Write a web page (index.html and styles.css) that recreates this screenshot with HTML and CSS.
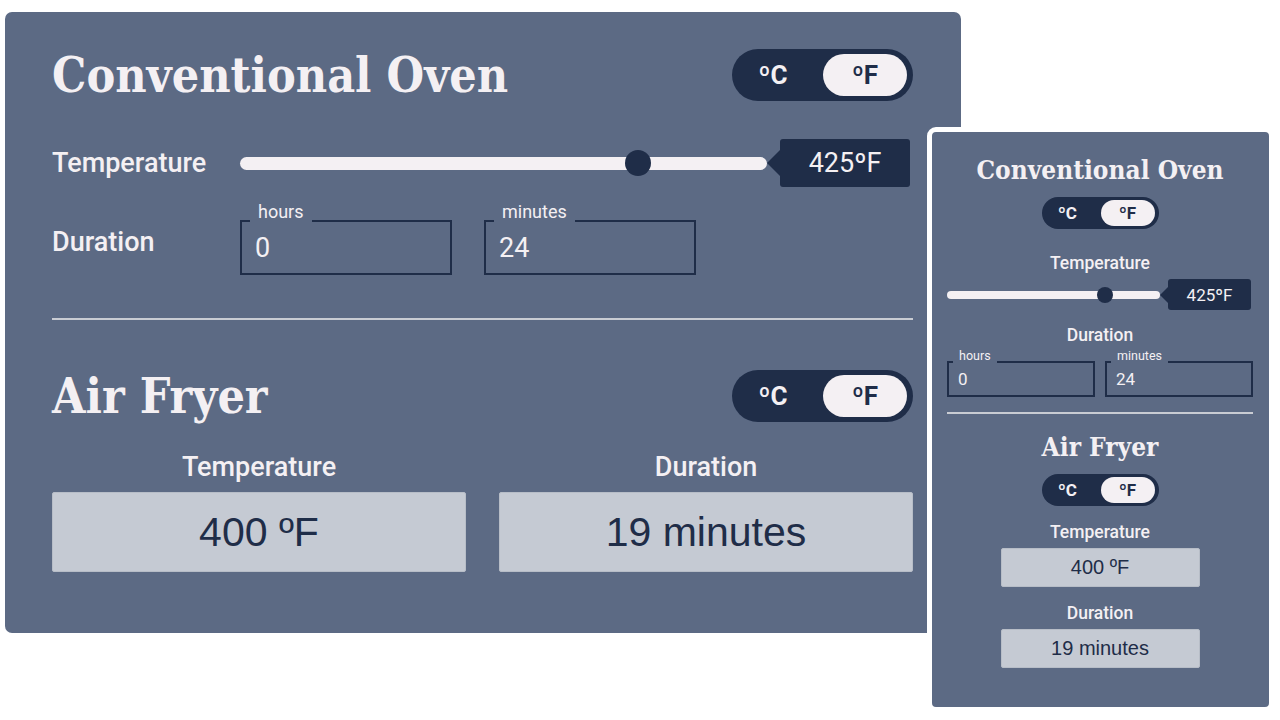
FILE: index.html
```html
<!DOCTYPE html>
<html lang="en">
<head>
  <meta charset="UTF-8" />
  <meta name="viewport" content="width=device-width, initial-scale=1.0"/>
  <title>Cooking Converter</title>
  <link rel="stylesheet" href="styles.css">
</head>
<body>
  <!-- Desktop layout -->
  <div class="card wide">
    <div class="head">
      <h1 class="title">Conventional Oven</h1>
      <div class="toggle"><span>ºC</span><span class="active">ºF</span></div>
    </div>

    <div class="row temp-row">
      <div class="row-label">Temperature</div>
      <div class="slider">
        <div class="track"><div class="thumb" style="left: 75.5%"></div></div>
        <div class="bubble">425ºF</div>
      </div>
    </div>

    <div class="row dur-row">
      <div class="row-label">Duration</div>
      <div class="fields">
        <div class="field">
          <div class="field-box"><span class="field-label">hours</span>0</div>
        </div>
        <div class="field">
          <div class="field-box"><span class="field-label">minutes</span>24</div>
        </div>
      </div>
    </div>

    <div class="divider"></div>

    <div class="head fryer-head">
      <h1 class="title">Air Fryer</h1>
      <div class="toggle"><span>ºC</span><span class="active">ºF</span></div>
    </div>

    <div class="readouts">
      <div class="readout">
        <div class="readout-head">Temperature</div>
        <div class="readout-value">400 ºF</div>
      </div>
      <div class="readout">
        <div class="readout-head">Duration</div>
        <div class="readout-value">19 minutes</div>
      </div>
    </div>
  </div>

  <!-- Mobile layout -->
  <div class="card narrow">
    <h1 class="title">Conventional Oven</h1>
    <div class="toggle"><span>ºC</span><span class="active">ºF</span></div>

    <div class="row-label">Temperature</div>
    <div class="slider">
      <div class="track"><div class="thumb" style="left: 74%"></div></div>
      <div class="bubble">425ºF</div>
    </div>

    <div class="row-label dur-label">Duration</div>
    <div class="fields">
      <div class="field">
        <div class="field-box"><span class="field-label">hours</span>0</div>
      </div>
      <div class="field">
        <div class="field-box"><span class="field-label">minutes</span>24</div>
      </div>
    </div>

    <div class="divider"></div>

    <h1 class="title fryer-title">Air Fryer</h1>
    <div class="toggle"><span>ºC</span><span class="active">ºF</span></div>

    <div class="readout">
      <div class="readout-head">Temperature</div>
      <div class="readout-value">400 ºF</div>
    </div>
    <div class="readout">
      <div class="readout-head">Duration</div>
      <div class="readout-value">19 minutes</div>
    </div>
  </div>
</body>
</html>
```

FILE: styles.css
```css
body {
  margin: 0;
  background: #fff;
  font-family: Roboto, "Liberation Sans", sans-serif;
  color: #f4f0f3;
}
.card {
  position: absolute;
  box-sizing: border-box;
  background: #5c6a84;
}
.title {
  margin: 0;
  font-family: "DejaVu Serif Condensed", "DejaVu Serif", serif;
  font-weight: bold;
  color: #f4f0f3;
  line-height: 1;
}
.toggle {
  display: inline-flex;
  background: #1f2d48;
  border-radius: 999px;
  font-weight: 700;
}
.toggle span {
  display: flex;
  align-items: center;
  justify-content: center;
  border-radius: 999px;
  color: #f4f0f3;
}
.toggle span.active {
  background: #f4f0f3;
  color: #1f2d48;
}
.row-label {
  font-weight: 500;
  color: #f4f0f3;
}
.slider {
  display: flex;
  align-items: center;
}
.track {
  flex: 1;
  position: relative;
  background: #f4f0f3;
  border-radius: 999px;
}
.thumb {
  position: absolute;
  top: 50%;
  transform: translate(-50%, -50%);
  background: #1f2d48;
  border-radius: 50%;
}
.bubble {
  position: relative;
  flex: none;
  display: flex;
  align-items: center;
  justify-content: center;
  background: #1f2d48;
  color: #f4f0f3;
  border-radius: 3px;
}
.bubble::before {
  content: "";
  position: absolute;
  top: 50%;
  transform: translateY(-50%);
  border-style: solid;
  border-color: transparent #1f2d48 transparent transparent;
}
.fields {
  display: flex;
}
.field-box {
  position: relative;
  box-sizing: border-box;
  border: 2px solid #1f2d48;
  color: #f4f0f3;
  display: flex;
  align-items: center;
}
.field-label {
  position: absolute;
  background: #5c6a84;
  color: #f4f0f3;
}
.divider {
  height: 2px;
  background: #c9ccd3;
}
.readout-head {
  font-weight: 500;
  text-align: center;
  color: #f4f0f3;
}
.readout-value {
  display: flex;
  align-items: center;
  justify-content: center;
  box-sizing: border-box;
  background: #c5cad3;
  border: 1px solid #b7bdc7;
  border-radius: 2px;
  font-family: "Liberation Sans", Arial, sans-serif;
  color: #1f2d48;
}

/* wide card */
.wide {
  left: 5px;
  top: 12px;
  width: 956px;
  height: 621px;
  padding: 37px 48px 0 47px;
  border-radius: 7px;
}
.wide .head {
  display: flex;
  justify-content: space-between;
  align-items: center;
  height: 52px;
}
.wide .title {
  font-size: 48px;
}
.wide .toggle {
  padding: 5px 6px;
  font-size: 26px;
}
.wide .toggle span {
  width: 70px;
  height: 42px;
}
.wide .toggle span.active {
  width: 84px;
  margin-left: 15px;
}
.wide .row {
  display: flex;
  align-items: center;
}
.wide .row-label {
  width: 188px;
  font-size: 27px;
}
.wide .temp-row {
  margin-top: 38px;
  height: 48px;
}
.wide .slider {
  flex: 1;
}
.wide .track {
  height: 13px;
}
.wide .thumb {
  width: 26px;
  height: 26px;
}
.wide .bubble {
  width: 130px;
  height: 48px;
  margin-left: 13px;
  margin-right: 3px;
  font-size: 27px;
}
.wide .bubble::before {
  left: -13px;
  border-width: 13px 13px 13px 0;
}
.wide .dur-row {
  margin-top: 16px;
}
.wide .dur-row .row-label {
  padding-top: 5px;
}
.wide .fields {
  gap: 32px;
}
.wide .field {
  width: 212px;
  padding-top: 17px;
}
.wide .field-box {
  height: 55px;
  padding-left: 13px;
  font-size: 27px;
}
.wide .field-label {
  top: -19px;
  left: 8px;
  padding: 0 8px 2px;
  font-size: 18px;
  line-height: 18px;
}
.wide .divider {
  margin-top: 43px;
}
.wide .fryer-head {
  margin-top: 50px;
}
.wide .readouts {
  display: grid;
  grid-template-columns: 1fr 1fr;
  gap: 33px;
  margin-top: 32px;
}
.wide .readout-head {
  font-size: 27px;
  line-height: 26px;
}
.wide .readout-value {
  height: 80px;
  margin-top: 12px;
  font-size: 41px;
}

/* narrow card */
.narrow {
  left: 927px;
  top: 127px;
  width: 347px;
  height: 585px;
  padding: 22px 16px 0 15px;
  border: 5px solid #fff;
  border-radius: 9px;
  text-align: center;
}
.narrow .title {
  font-size: 26px;
  line-height: 32px;
}
.narrow .toggle {
  margin-top: 11px;
  padding: 3px 4px;
  font-size: 17px;
}
.narrow .toggle span {
  width: 44px;
  height: 26px;
}
.narrow .toggle span.active {
  width: 54px;
  margin-left: 11px;
}
.narrow .row-label,
.narrow .readout-head {
  margin-top: 25px;
  font-size: 17.5px;
  line-height: 19px;
}
.narrow .slider {
  margin-top: 6px;
  height: 31px;
}
.narrow .track {
  height: 8px;
}
.narrow .thumb {
  width: 16px;
  height: 16px;
}
.narrow .bubble {
  width: 83px;
  height: 31px;
  margin-left: 8px;
  margin-right: 2px;
  font-size: 17px;
}
.narrow .bubble::before {
  left: -8px;
  border-width: 8px 8px 8px 0;
}
.narrow .dur-label {
  margin-top: 16px;
}
.narrow .fields {
  gap: 10px;
  margin-top: 4px;
  text-align: left;
}
.narrow .field {
  flex: 1;
  padding-top: 12px;
}
.narrow .field-box {
  height: 36px;
  padding-left: 9px;
  font-size: 17px;
}
.narrow .field-label {
  top: -14px;
  left: 4px;
  padding: 0 6px 2px;
  font-size: 12.5px;
  line-height: 13px;
}
.narrow .divider {
  margin-top: 15px;
}
.narrow .fryer-title {
  margin-top: 17px;
}
.narrow .readout-head {
  margin-top: 17px;
}
.narrow .readout-value {
  width: 199px;
  height: 39px;
  margin: 6px auto 0;
  font-size: 20px;
}
```
